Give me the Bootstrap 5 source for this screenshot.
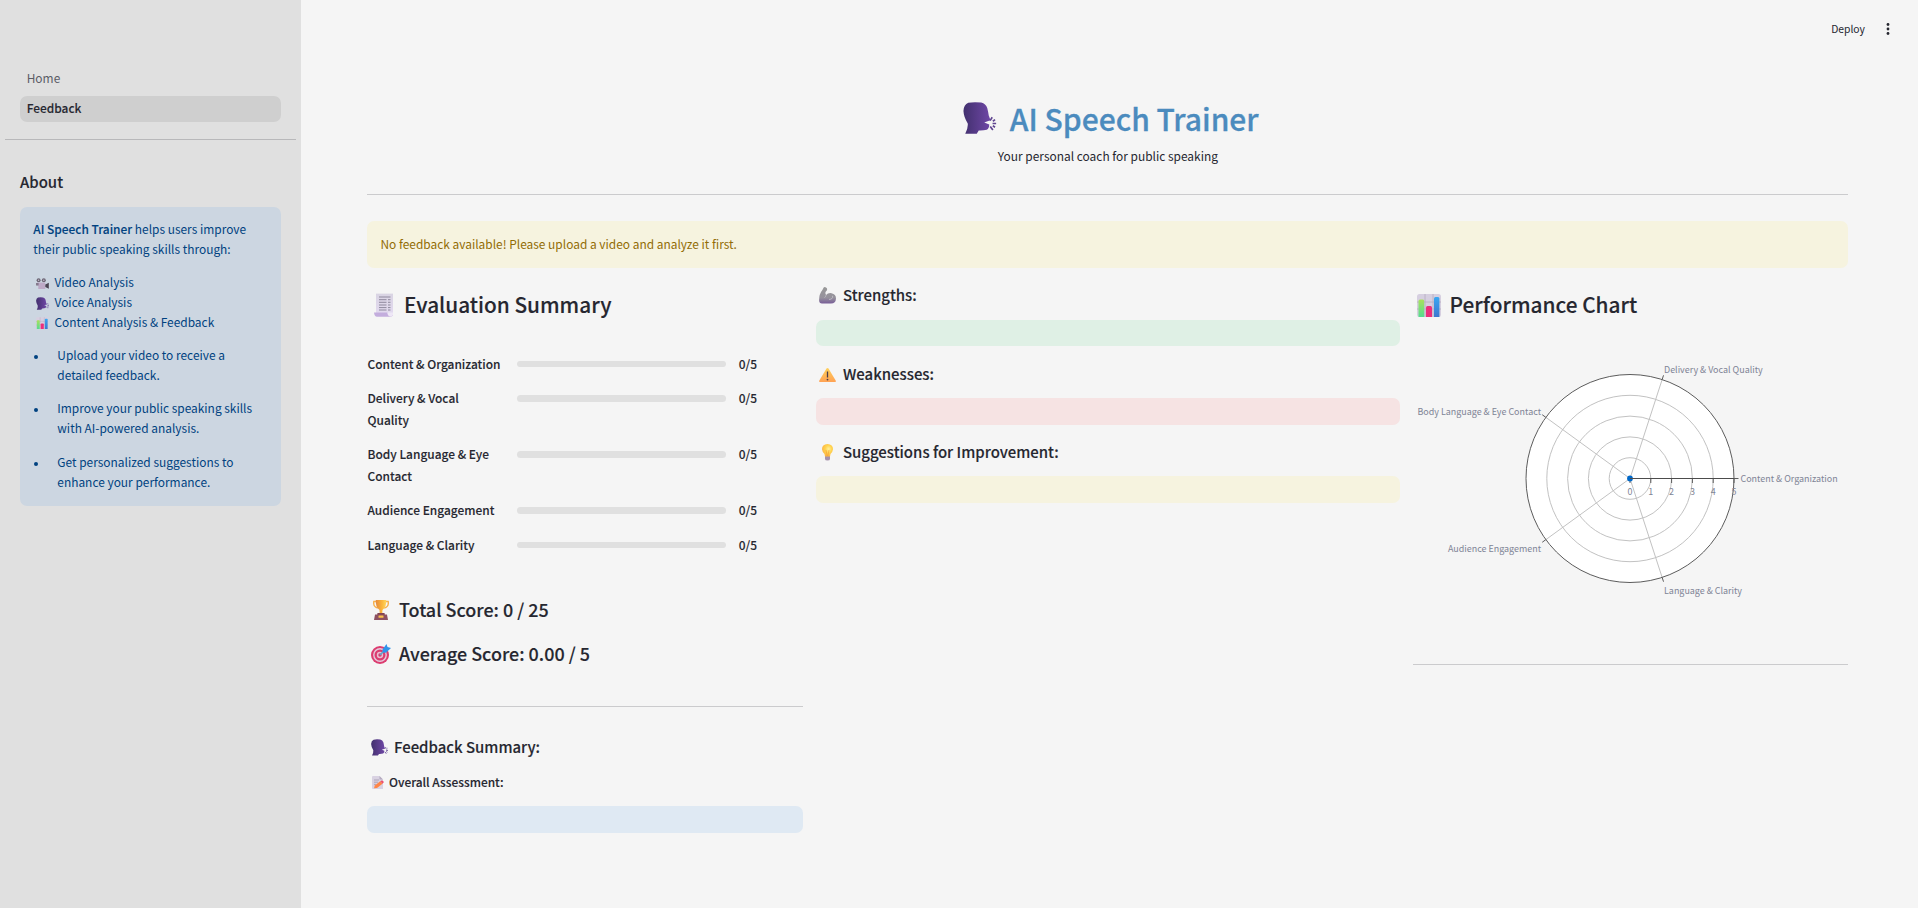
<!DOCTYPE html>
<html lang="en">
<head>
<meta charset="utf-8">
<meta name="viewport" content="width=device-width, initial-scale=1">
<title>AI Speech Trainer</title>
<link href="https://cdn.jsdelivr.net/npm/bootstrap@5.3.0/dist/css/bootstrap.min.css" rel="stylesheet">
<style>
  body { background:#f5f5f5; color:#262730; font-family:"Noto Sans CJK SC",sans-serif; font-size:11.93px; line-height:20px; }
  h1,h2,h3,h4,h5,p,ul { margin:0; }
  h1,h2,h3,h4,h5 { font-weight:500; white-space:nowrap; display:flex; align-items:center; -webkit-text-stroke:.12px currentColor; }
  h1 { font-size:30px; line-height:44px; color:#4b8bbe; -webkit-text-stroke-width:.3px; }
  h2 { font-size:20.8px; line-height:36px; margin-top:18px; }
  h3 { font-size:17.95px; line-height:30px; }
  h4 { font-size:14.95px; line-height:24px; }
  h5 { font-size:11.93px; line-height:20px; }
  svg { flex:none; display:block; }
  b, .semi { font-weight:500; -webkit-text-stroke:.1px currentColor; }

  .side { width:301px; background:#e0e0e0; }
  .side-nav { padding:65px 20px 0; }
  .side-link { height:26px; line-height:26px; padding-left:6.7px; border-radius:7px; margin-bottom:5px; color:#5b5c66; }
  .side-link.active { background:#cfcfcf; color:#262730; margin-bottom:0; line-height:24.5px; }
  .side-rule { height:1px; background:#b8b8ba; margin:17px 5px 0; }
  .side-head { margin:30px 0 13px 20px; }
  .about { margin:0 20px; height:299px; background:#ccd6e1; border-radius:7px; padding:12px 13px 0 13.3px; color:#004280; }
  .about .feat { height:20px; }
  .about ul { padding:0; list-style:none; }
  .about li { position:relative; padding-left:24px; margin-bottom:13.4px; }
  .about li::before { content:""; position:absolute; left:1px; top:10px; width:4px; height:4px; border-radius:50%; background:#004280; }

  .page { padding:0 70px 0 66px; }
  .topbar { height:95.5px; padding:18px 0 0; margin-right:-44px; font-size:10.35px; }
  .topbar span { line-height:22px; }
  .rule { height:1px; background:#cbcbcd; }
  .box { border-radius:7px; height:27px; }
  .warn { background:#f6f3df; }
  .ok { background:#dff0e5; height:26px; }
  .bad { background:#f6e3e3; }
  .note { background:#dfe9f3; }
  .notice { height:47px; line-height:46px; padding-left:13.5px; color:#926c05; margin-top:26px; }
  .cols { display:grid; grid-template-columns:436px 584px 435px; column-gap:13px; }
  .score { display:grid; grid-template-columns:136px 209px 1fr; column-gap:13.5px; line-height:21.5px; margin-bottom:13px; padding-left:.5px; }
  .score span:last-child { margin-left:-.7px; }
  .meter { height:6.6px; border-radius:4px; background:#e0e0e0; margin-top:8.2px; }
  .chart text { font-size:8.95px; fill:#808495; }
</style>
</head>
<body>
<svg width="0" height="0" class="position-absolute" aria-hidden="true">
  <defs>
    <linearGradient id="gHead" x1="0" y1="0" x2="1" y2="0"><stop offset="0" stop-color="#42306e"/><stop offset="1" stop-color="#6f47a6"/></linearGradient>
    <linearGradient id="gGreen" x1="0" y1="0" x2="0" y2="1"><stop offset="0" stop-color="#a9e25c"/><stop offset="1" stop-color="#55dc90"/></linearGradient>
    <linearGradient id="gBlue" x1="0" y1="0" x2="0" y2="1"><stop offset="0" stop-color="#3aa8f2"/><stop offset="1" stop-color="#3d77cf"/></linearGradient>
    <linearGradient id="gGold" x1="0" y1="0" x2="1" y2="0"><stop offset="0" stop-color="#e58a3c"/><stop offset=".6" stop-color="#fbb63c"/><stop offset="1" stop-color="#ffd75e"/></linearGradient>
    <linearGradient id="gWarn" x1="0" y1="0" x2="0" y2="1"><stop offset="0" stop-color="#ffd05a"/><stop offset="1" stop-color="#ffa254"/></linearGradient>
    <radialGradient id="gBulb" cx=".6" cy=".4" r=".6"><stop offset="0" stop-color="#fff09a"/><stop offset=".5" stop-color="#ffd34f"/><stop offset="1" stop-color="#fcb744"/></radialGradient>
    <linearGradient id="gArm" x1="0" y1="0" x2="0" y2="1"><stop offset="0" stop-color="#989898"/><stop offset=".65" stop-color="#96929c"/><stop offset="1" stop-color="#785c98"/></linearGradient>
    <linearGradient id="gPage" x1="0" y1="0" x2="0" y2="1"><stop offset="0" stop-color="#d9d4e3"/><stop offset="1" stop-color="#e3daf0"/></linearGradient>
  </defs>
  <symbol id="head" viewBox="0 0 33 32">
    <path d="M5 .8Q10-.3 18 .5Q22.500 1.500 24 6Q25 10 25.500 13.500L27 17.500Q27.200 18.700 25 19L21 20.500L26 22.500Q26 26.500 23.500 27.700Q20 28.700 15.500 28.500L13.500 31.700H2Q5 26 4.500 21.500Q.5 15 .2 9Q.5 2.500 5 .8Z" fill="url(#gHead)"/>
    <path d="M26.800 18.600L29 15.300M29.300 21.500L33 21.500M27 24.500L29.600 28M29.600 19.200L31.800 17.600M29.600 23.800L31.800 25.200" stroke="#5f4590" stroke-width="1.700" fill="none"/>
  </symbol>
  <symbol id="receipt" viewBox="0 0 19 24">
    <path d="M2 1L3 .2L4 1L5 .2L6 1L7 .2L8 1L9 .2L10 1L11 .2L12 1L13 .2L14 1L15 .2L16 1L17 .2L18 1L19 .2V22H2Z" fill="url(#gPage)"/>
    <path d="M0 19.500H13.500Q13.300 22 15.500 22H19Q18.500 23.800 16 23.800H3Q.3 23.500 0 19.500Z" fill="#c3addd"/>
    <path d="M13.500 19.500H19V22Q18 23.500 16 23.500Q13.500 22.800 13.500 19.500Z" fill="#eee7f6"/>
    <path d="M5 4H16.500M5 6.700H12.500M14 6.700H16.500M5 9.300H12.500M14 9.300H16.500M5 12H12.500M14 12H16.500M5 14.600H12.500M14 14.600H16.500M5 17H12.500M14 17H16.500" stroke="#8f899d" stroke-width="1"/>
  </symbol>
  <symbol id="bars" viewBox="0 0 24 23">
    <rect width="24" height="23" rx="2.500" fill="#d6cfe0"/>
    <path d="M0 8H24M0 15H24M8 0V23M16 0V23" stroke="#b5adbf" stroke-width=".8"/>
    <path d="M1.500 7Q1.500 5.500 3 5.500H6Q7.200 5.500 7.200 7V23H1.500Z" fill="url(#gGreen)"/>
    <path d="M9 13.500Q9 12 10.500 12H13.500Q15 12 15 13.500V23H9Z" fill="#ec2f7b"/>
    <path d="M17 4.500Q17 3 18.500 3H21Q22.400 3 22.400 4.500V23H17Z" fill="url(#gBlue)"/>
  </symbol>
  <symbol id="trophy" viewBox="0 0 16 20">
    <path d="M3.500 1.500H.8Q0 7 4.800 8M12.500 1.500H15.200Q16 7 11.200 8" stroke="#f7b04a" stroke-width="1.400" fill="none"/>
    <path d="M2.800 0H13.200Q13.600 7.500 9.500 10L9.300 13H6.700L6.500 10Q2.400 7.500 2.800 0Z" fill="url(#gGold)"/>
    <path d="M4.500 13H11.500L12 16H4Z" fill="#83434e"/>
    <path d="M2 14.500H14L15 20H1Z" fill="#8d5061"/>
    <rect x="5.500" y="15.600" width="5" height="2.200" rx=".5" fill="#fbc24c"/>
  </symbol>
  <symbol id="target" viewBox="0 0 20 20">
    <circle cx="9" cy="11" r="9" fill="#dc3c70"/><circle cx="9" cy="11" r="6.900" fill="#e4cbdc"/><circle cx="9" cy="11" r="5.500" fill="#dc3c70"/><circle cx="9" cy="11" r="3.200" fill="#e8bfd2"/><circle cx="9" cy="11" r="1.700" fill="#d9386c"/>
    <path d="M9 11L15 5" stroke="#5da5cd" stroke-width="1.700"/>
    <path d="M11.500 5.500L15.500 0L16.500 3L20 4L15 8.700L11.800 8.500Z" fill="#2f93ea"/>
  </symbol>
  <symbol id="memo" viewBox="0 0 12 13">
    <path d="M1 0H7.500L11 3.500V13H1Q0 13 0 12V1Q0 0 1 0Z" fill="#d9d2e2"/>
    <path d="M7.500 0V3.500H11Z" fill="#b4aabf"/>
    <path d="M2 4H7M2 6.200H6M2 8.400H4" stroke="#a198ad" stroke-width=".8"/>
    <path d="M2 12.300L2.800 9.500L8.200 5.300L10.500 7.700L5 12Z" fill="#ff8547"/>
    <path d="M8.200 5.300L9.600 4.400Q11.500 4.200 11.800 6.200L10.500 7.700Z" fill="#ef506b"/>
  </symbol>
  <symbol id="arm" viewBox="0 0 17 17">
    <path d="M4.500 .8Q5.300-.4 7 .4Q8.800 1.300 7.800 3.500Q6.300 4.500 6.300 6L7 8Q9 5.700 12.500 6.200Q17 7 17 11.500Q16.800 16.300 12 16.600H3Q.2 16.400 .1 13.500Q0 7 3.200 3.200Q3.800 2.400 4.500 .8Z" fill="url(#gArm)"/>
    <path d="M7 8.200Q6.800 10 5.500 10.500M10 12.500Q14.500 12 13.500 8.800" stroke="#bcb9c2" stroke-width="1" fill="none"/>
  </symbol>
  <symbol id="caution" viewBox="0 0 17 14">
    <path d="M7.500 .6Q8.500-.5 9.500 .6L16.800 12.800Q17 14 16 14H1Q0 14 .2 12.800Z" fill="url(#gWarn)"/>
    <path d="M8.500 3.500V9.500" stroke="#4a3d4d" stroke-width="1.300"/><circle cx="8.500" cy="11.600" r=".9" fill="#4a3d4d"/>
  </symbol>
  <symbol id="bulb" viewBox="0 0 11 17">
    <path d="M3 11H8V15Q8 16.500 5.500 16.500Q3 16.500 3 15Z" fill="#a792ac"/>
    <path d="M5.500 0Q11 .3 11 5.300Q10.800 7.800 8.500 10L8 12.500H3L2.500 10Q.2 7.800 0 5.300Q0 .3 5.500 0Z" fill="url(#gBulb)"/>
    <path d="M4 6L5.200 12M7 6L5.800 12" stroke="#f59a36" stroke-width=".6"/>
  </symbol>
  <symbol id="camera" viewBox="0 0 13 11">
    <circle cx="2.600" cy="2.200" r="2" fill="#6d6675"/><circle cx="7.800" cy="2.200" r="2" fill="#6d6675"/>
    <circle cx="2.600" cy="2.200" r=".7" fill="#c7bfcf"/><circle cx="7.800" cy="2.200" r=".7" fill="#c7bfcf"/>
    <path d="M1 4.500H9.300V11H2.300V7.500H1Z" fill="#bda9c6"/>
    <path d="M9.300 6.500L12.800 4.700V10.800L9.300 9Z" fill="#4b4352"/>
    <path d="M0 5H2.600V7.500H0Z" fill="#857a8d"/>
  </symbol>
</svg>

<div class="d-flex vh-100">
  <aside class="side flex-shrink-0">
    <nav class="side-nav">
      <div class="side-link">Home</div>
      <div class="side-link active semi">Feedback</div>
    </nav>
    <div class="side-rule"></div>
    <h4 class="side-head">About</h4>
    <section class="about">
      <p><b>AI Speech Trainer</b> helps users improve<br>their public speaking skills through:</p>
      <div style="height:13px"></div>
      <div class="feat d-flex align-items-center"><svg width="13" height="11" style="margin:3px 5.500px 0 2.700px"><use href="#camera"/></svg>Video Analysis</div>
      <div class="feat d-flex align-items-center"><svg width="13" height="13" style="margin:2px 5.500px 0 2.700px"><use href="#head"/></svg>Voice Analysis</div>
      <div class="feat d-flex align-items-center"><svg width="12.500" height="12.500" style="margin:2px 6px 0 2.700px"><use href="#bars"/></svg>Content Analysis &amp; Feedback</div>
      <div style="height:13px"></div>
      <ul>
        <li>Upload your video to receive a<br>detailed feedback.</li>
        <li>Improve your public speaking skills<br>with AI-powered analysis.</li>
        <li>Get personalized suggestions to<br>enhance your performance.</li>
      </ul>
    </section>
  </aside>

  <main class="page flex-grow-1">
    <div class="topbar d-flex justify-content-end align-items-start">
      <span>Deploy</span>
      <svg width="4" height="12" viewBox="0 0 4 12" style="margin:5px 2px 0 21px" fill="#262730"><circle cx="2" cy="1.500" r="1.400"/><circle cx="2" cy="6" r="1.400"/><circle cx="2" cy="10.500" r="1.400"/></svg>
    </div>
    <h1 class="justify-content-center" style="padding-left:7px"><svg width="33.500" height="32" style="margin-right:13px"><use href="#head"/></svg>AI Speech Trainer</h1>
    <p class="text-center" style="margin:6.500px 0 0 .8px">Your personal coach for public speaking</p>
    <div class="rule" style="margin-top:28px"></div>
    <div class="box warn notice">No feedback available! Please upload a video and analyze it first.</div>

    <div class="cols">
      <section>
        <h2><svg width="19" height="24" style="margin:2px 11.500px 0 6.500px"><use href="#receipt"/></svg>Evaluation Summary</h2>
        <div style="height:30.500px"></div>
        <div class="score semi"><span>Content &amp; Organization</span><div class="meter"></div><span>0/5</span></div>
        <div class="score semi"><span>Delivery &amp; Vocal<br>Quality</span><div class="meter"></div><span>0/5</span></div>
        <div class="score semi"><span>Body Language &amp; Eye<br>Contact</span><div class="meter"></div><span>0/5</span></div>
        <div class="score semi"><span>Audience Engagement</span><div class="meter"></div><span>0/5</span></div>
        <div class="score semi"><span>Language &amp; Clarity</span><div class="meter"></div><span>0/5</span></div>
        <h3 style="margin-top:39px"><svg width="16" height="20" style="margin:2px 10px 0 6px"><use href="#trophy"/></svg>Total Score: 0 / 25</h3>
        <h3 style="margin-top:14px"><svg width="20" height="20" style="margin:2px 8px 0 4px"><use href="#target"/></svg>Average Score: 0.00 / 5</h3>
        <div class="rule" style="margin-top:38px"></div>
        <h4 style="margin-top:28px"><svg width="17" height="17" style="margin:0 6px 0 4px"><use href="#head"/></svg>Feedback Summary:</h4>
        <h5 style="margin-top:13px"><svg width="12" height="13" style="margin:0 5px 0 5px"><use href="#memo"/></svg>Overall Assessment:</h5>
        <div class="box note" style="margin-top:14px"></div>
      </section>

      <section>
        <h4 style="margin-top:15px"><svg width="17" height="17" style="margin:0 7px 0 3px"><use href="#arm"/></svg>Strengths:</h4>
        <div class="box ok" style="margin-top:13px"></div>
        <h4 style="margin-top:16px"><svg width="17" height="14" style="margin:2px 7px 0 3px"><use href="#caution"/></svg>Weaknesses:</h4>
        <div class="box bad" style="margin-top:12px"></div>
        <h4 style="margin-top:15px"><svg width="11" height="17" style="margin:0 10px 0 6px"><use href="#bulb"/></svg>Suggestions for Improvement:</h4>
        <div class="box warn" style="margin-top:12px"></div>
      </section>

      <section>
        <h2><svg width="24" height="23" style="margin:2px 8.500px 0 4px"><use href="#bars"/></svg>Performance Chart</h2>
        <svg class="chart mt-1px" width="435" height="342" viewBox="0 -1 435 342" id="radar"></svg>
        <div class="rule"></div>
      </section>
    </div>
  </main>
</div>

<script src="https://cdn.jsdelivr.net/npm/bootstrap@5.3.0/dist/js/bootstrap.bundle.min.js"></script>
<script>
  // Polar chart: five categories, radial scale 0 to 5
  const cx = 217, cy = 155.5, R = 104;
  const cats = [
    ["Content & Organization", 327.5, 159, "start"],
    ["Delivery & Vocal Quality", 251, 50, "start"],
    ["Body Language & Eye Contact", 128, 92, "end"],
    ["Audience Engagement", 128, 229, "end"],
    ["Language & Clarity", 251, 271, "start"]
  ];
  let out = `<circle cx="${cx}" cy="${cy}" r="${R}" fill="#fff"/>`;
  cats.forEach((c, i) => {
    const a = i * 72 * Math.PI / 180, x = Math.cos(a), y = -Math.sin(a);
    out += `<path d="M${cx} ${cy}L${cx + R * x} ${cy + R * y}" stroke="#c2c2c2"/>`;
  });
  for (let k = 1; k < 5; k++) out += `<circle cx="${cx}" cy="${cy}" r="${R * k / 5}" fill="none" stroke="#c2c2c2"/>`;
  out += `<circle cx="${cx}" cy="${cy}" r="${R}" fill="none" stroke="#5c5c5c"/>`;
  cats.forEach((c, i) => {
    const a = i * 72 * Math.PI / 180, x = Math.cos(a), y = -Math.sin(a);
    out += `<path d="M${cx + R * x} ${cy + R * y}L${cx + (R + 4.500) * x} ${cy + (R + 4.500) * y}" stroke="#5c5c5c"/>`;
    out += `<text x="${c[1]}" y="${c[2]}" text-anchor="${c[3]}">${c[0].replace("&", "&amp;")}</text>`;
  });
  for (let k = 0; k < 6; k++) {
    const x = cx + R * k / 5;
    out += `<path d="M${x} ${cy}V${cy + 4.500}" stroke="#5c5c5c"/><text x="${x}" y="${cy + 16.500}" text-anchor="middle">${k}</text>`;
  }
  out += `<circle cx="${cx}" cy="${cy}" r="2.900" fill="#0068c9"/><path d="M${cx} ${cy}H${cx + R}" stroke="#4c4c4c"/>`;
  document.getElementById("radar").innerHTML = out;
</script>
</body>
</html>
